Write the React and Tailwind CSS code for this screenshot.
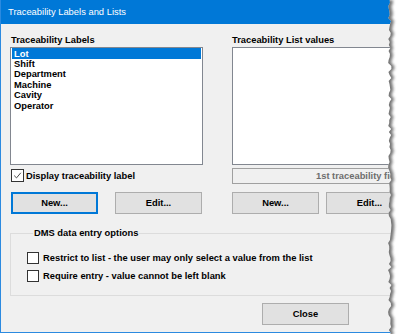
import React from "react";

const labels = ["Lot", "Shift", "Department", "Machine", "Cavity", "Operator"];

// jagged edge for the torn right side of the screenshot
const makeEdge = () => {
  let seed = 7;
  const rand = () => {
    seed = (seed * 9301 + 49297) % 233280;
    return seed / 233280;
  };
  const pts = [];
  for (let y = 0; y <= 336; y += 3) {
    pts.push([8 + rand() * 3.5, y]);
  }
  return pts;
};

const edge = makeEdge();
const rightRegion =
  edge.map(([x, y]) => `${x},${y}`).join(" ") + " 30,336 30,0";
const shadowRegion =
  edge.map(([x, y]) => `${x + 3},${y}`).join(" ") + " -20,336 -20,0";

const TornEdge = () => (
  <svg
    className="absolute left-[380px] top-0"
    width="25"
    height="334"
    viewBox="0 0 25 334"
  >
    <defs>
      <clipPath id="right-side">
        <polygon points={rightRegion} />
      </clipPath>
      <filter id="blur" x="-50%" y="-5%" width="200%" height="110%">
        <feGaussianBlur stdDeviation="1.4" />
      </filter>
    </defs>
    <polygon points={rightRegion} fill="#ffffff" />
    <g clipPath="url(#right-side)">
      <polygon
        points={shadowRegion}
        fill="#5a5a5a"
        opacity="0.85"
        filter="url(#blur)"
      />
    </g>
  </svg>
);

const CheckBox = ({ checked, size = "w-[13px] h-[13px]" }) => (
  <div
    className={`${size} shrink-0 border border-[#333333] bg-white flex items-center justify-center`}
  >
    {checked && (
      <svg width="9" height="9" viewBox="0 0 9 9">
        <path
          d="M1.2 4.6 L3.5 6.9 L7.8 1.8"
          fill="none"
          stroke="#4a4a4a"
          strokeWidth="1"
        />
      </svg>
    )}
  </div>
);

const Button = ({ children, primary, className = "" }) => (
  <div
    className={`w-[87px] h-[22px] flex items-center justify-center bg-[#e1e1e1] text-black ${
      primary ? "border-2 border-[#0078d7]" : "border border-[#adadad]"
    } ${className}`}
  >
    {children}
  </div>
);

export default function App() {
  return (
    <div
      className="relative w-[405px] h-[334px] overflow-hidden bg-white"
      style={{ fontFamily: '"Liberation Sans", Arial, sans-serif' }}
    >
      <div className="w-[436px] h-[333px] border-l border-b border-[#2b8ae0] bg-[#f0f0f0] flex flex-col">
        <div className="h-[24px] shrink-0 bg-[#0078d7] text-white text-[9.4px] flex items-center pl-[7px]">
          Traceability Labels and Lists
        </div>

        <div className="pl-[9px] pt-[10px] text-[9.35px] font-bold text-black">
          <div className="flex gap-[29px]">
            <div className="w-[193px] flex flex-col">
              <div className="h-[12px] leading-[12px] pl-[1px]">
                Traceability Labels
              </div>
              <div className="mt-[1px] h-[118px] border border-[#828790] bg-white px-[1px]">
                {labels.map((l, i) => (
                  <div
                    key={l}
                    className={`pl-[2px] ${
                      i === 0
                        ? "h-[11px] leading-[12px] bg-[#0078d7] text-white"
                        : "h-[10.4px] leading-[11.4px]"
                    }`}
                  >
                    {l}
                  </div>
                ))}
              </div>
              <div className="mt-[4px] h-[13px] flex items-center gap-[2px] pl-[1px]">
                <CheckBox checked />
                <span>Display traceability label</span>
              </div>
              <div className="mt-[10px] flex justify-between px-[1px]">
                <Button primary>New...</Button>
                <Button>Edit...</Button>
              </div>
            </div>

            <div className="w-[193px] flex flex-col">
              <div className="h-[12px] leading-[12px]">
                Traceability List values
              </div>
              <div className="mt-[1px] h-[118px] border border-[#828790] bg-white" />
              <div className="mt-[3px] h-[16px] border border-[#a0a0a0] bg-[#f0f0f0] flex items-center pl-[83px] text-[#6d6d6d] whitespace-nowrap overflow-hidden">
                1st traceability field
              </div>
              <div className="mt-[8px] flex gap-[7px]">
                <Button>New...</Button>
                <Button>Edit...</Button>
              </div>
            </div>
          </div>

          <fieldset className="mt-[13px] w-[416px] border border-[#dcdcdc] pl-[16px] pt-[13px] pb-[13px]">
            <legend className="ml-[6px] px-[1px] h-[12px] leading-[12px]">
              DMS data entry options
            </legend>
            <div className="flex flex-col gap-[6px]">
              <div className="h-[12px] flex items-center gap-[4px]">
                <CheckBox size="w-[12px] h-[12px]" />
                <span>
                  Restrict to list - the user may only select a value from the
                  list
                </span>
              </div>
              <div className="h-[12px] flex items-center gap-[4px]">
                <CheckBox size="w-[12px] h-[12px]" />
                <span>Require entry - value cannot be left blank</span>
              </div>
            </div>
          </fieldset>

          <div className="mt-[7px] flex">
            <Button className="ml-[252px]">Close</Button>
          </div>
        </div>
      </div>
      <TornEdge />
    </div>
  );
}
